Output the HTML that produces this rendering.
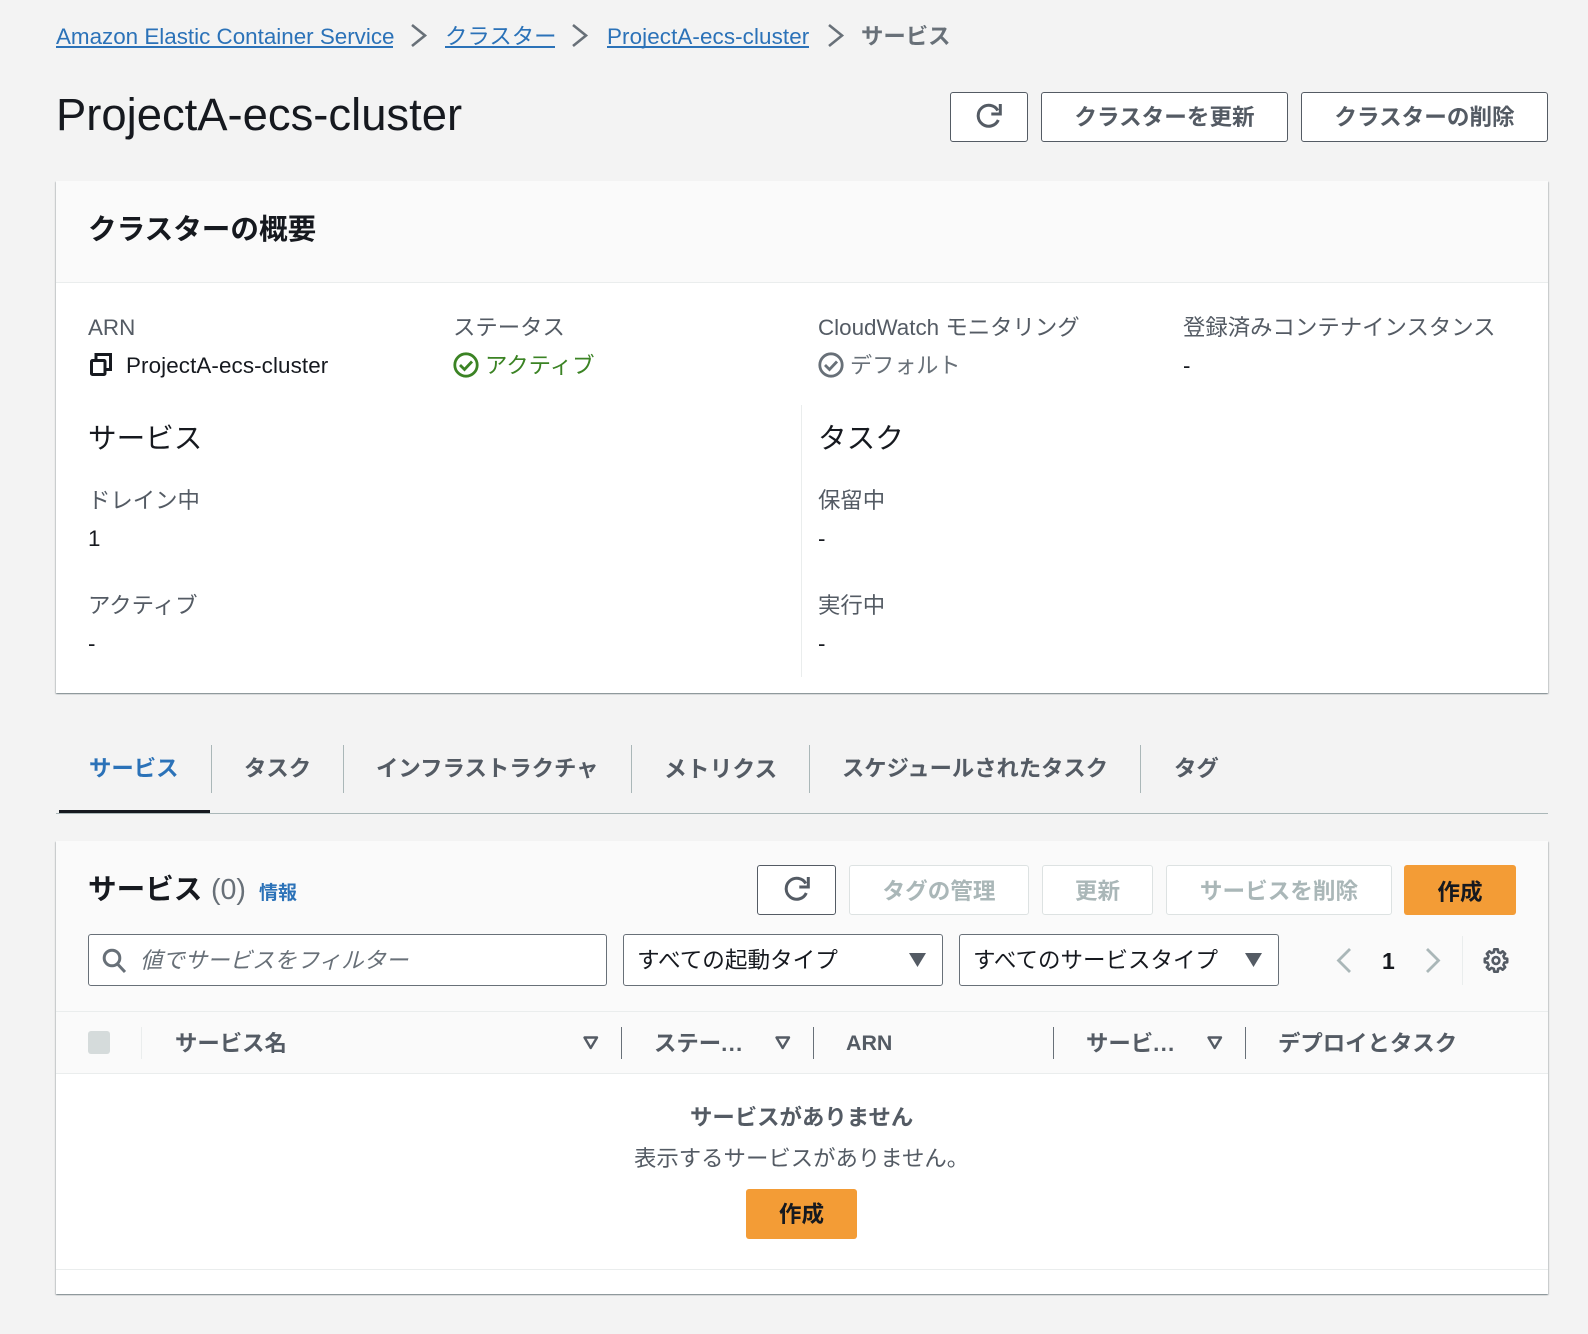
<!DOCTYPE html>
<html lang="ja">
<head>
<meta charset="utf-8">
<title>ProjectA-ecs-cluster</title>
<style>
html,body{margin:0;padding:0;width:1588px;height:1334px;overflow:hidden;background:#f3f3f3}
body{position:relative;font-family:"Liberation Sans","Noto Sans CJK JP",sans-serif;font-size:22.4px;color:#16191f}
.t{position:absolute;white-space:nowrap;line-height:30px;height:30px}
.lab{color:#545b64}
.b{font-weight:700}
.tab{font-weight:700;color:#545b64}
.link{color:#2b72b8}
.h{font-size:28.6px}
.p{position:absolute;left:56px;width:1492px;background:#fff;box-shadow:0 1px 1px 0 rgba(0,28,36,.3),1px 1px 1px 0 rgba(0,28,36,.15),-1px 1px 1px 0 rgba(0,28,36,.15)}
.hd{position:absolute;left:0;right:0;top:0;background:#fafafa}
.ln{position:absolute;background:#eaeded}
.btn{position:absolute;box-sizing:border-box;display:flex;align-items:center;justify-content:center;font-weight:700;font-size:22.6px;border-radius:3px;background:#fff;border:1.5px solid #545b64;color:#545b64;white-space:nowrap}
.dis{border-color:#dde2e2;color:#aab7b8;padding-bottom:2px}
.org{border:none;background:#f39c36;color:#16191f}
.fld{position:absolute;box-sizing:border-box;background:#fff;border:1.5px solid #687078;border-radius:3px}
.dots{letter-spacing:1.2px}
svg{position:absolute;left:0;top:0}
</style>
</head>
<body>

<!-- breadcrumb -->
<div class="t link" style="left:56px;top:22px">Amazon Elastic Container Service</div>
<div class="ln" style="left:56px;top:46px;width:337px;height:2px;background:#2b72b8"></div>
<div class="t link" style="left:445px;top:22px">クラスター</div>
<div class="ln" style="left:445px;top:46px;width:110px;height:2px;background:#2b72b8"></div>
<div class="t link" style="left:607px;top:22px;letter-spacing:.1px">ProjectA-ecs-cluster</div>
<div class="ln" style="left:607px;top:46px;width:202px;height:2px;background:#2b72b8"></div>
<div class="t b" style="left:861px;top:22px;color:#687078">サービス</div>

<!-- title -->
<div class="t" style="left:56px;top:100px;font-size:45.4px;line-height:30px">ProjectA-ecs-cluster</div>

<div class="btn" style="left:950px;top:92px;width:78px;height:50px"></div>
<div class="btn" style="left:1041px;top:92px;width:247px;height:50px;padding-bottom:4px">クラスターを更新</div>
<div class="btn" style="left:1301px;top:92px;width:247px;height:50px;padding-bottom:4px">クラスターの削除</div>

<!-- overview panel -->
<div class="p" style="top:181px;height:512px">
  <div class="hd" style="height:101px;background:#fafafa;border-bottom:1px solid #eaeded"></div>
</div>
<div class="t b h" style="left:88px;top:215px">クラスターの概要</div>

<div class="t lab" style="left:88px;top:313px">ARN</div>
<div class="t" style="left:126px;top:351px;letter-spacing:.1px">ProjectA-ecs-cluster</div>
<div class="t lab" style="left:453px;top:313px">ステータス</div>
<div class="t" style="left:485px;top:351px;color:#3b8324">アクティブ</div>
<div class="t lab" style="left:818px;top:313px">CloudWatch モニタリング</div>
<div class="t" style="left:850px;top:351px;color:#687078;font-size:22.1px">デフォルト</div>
<div class="t lab" style="left:1183px;top:313px">登録済みコンテナインスタンス</div>
<div class="t" style="left:1183px;top:351px">-</div>

<div class="ln" style="left:801px;top:405px;width:1px;height:272px"></div>

<div class="t h" style="left:88px;top:424px">サービス</div>
<div class="t lab" style="left:88px;top:486px">ドレイン中</div>
<div class="t" style="left:88px;top:524px">1</div>
<div class="t lab" style="left:88px;top:591px">アクティブ</div>
<div class="t" style="left:88px;top:629px">-</div>

<div class="t h" style="left:818px;top:424px">タスク</div>
<div class="t lab" style="left:818px;top:486px">保留中</div>
<div class="t" style="left:818px;top:524px">-</div>
<div class="t lab" style="left:818px;top:591px">実行中</div>
<div class="t" style="left:818px;top:629px">-</div>

<!-- tabs -->
<div class="t tab link" style="left:89px;top:754px;color:#2b72b8">サービス</div>
<div class="t tab" style="left:244px;top:754px">タスク</div>
<div class="t tab" style="left:376px;top:754px">インフラストラクチャ</div>
<div class="t tab" style="left:664px;top:754px;font-size:22.8px">メトリクス</div>
<div class="t tab" style="left:842px;top:754px;font-size:22.3px">スケジュールされたタスク</div>
<div class="t tab" style="left:1174px;top:754px">タグ</div>
<div class="ln" style="left:211px;top:745px;width:1px;height:48px;background:#aab7b8"></div>
<div class="ln" style="left:343px;top:745px;width:1px;height:48px;background:#aab7b8"></div>
<div class="ln" style="left:631px;top:745px;width:1px;height:48px;background:#aab7b8"></div>
<div class="ln" style="left:809px;top:745px;width:1px;height:48px;background:#aab7b8"></div>
<div class="ln" style="left:1140px;top:745px;width:1px;height:48px;background:#aab7b8"></div>
<div class="ln" style="left:56px;top:813px;width:1492px;height:1px;background:#aab7b8"></div>
<div class="ln" style="left:59px;top:810px;width:151px;height:3px;background:#16191f"></div>

<!-- services panel -->
<div class="p" style="top:841px;height:453px">
  <div class="hd" style="height:232px"></div>
  <div class="ln" style="left:0;right:0;top:170px;height:1px"></div>
  <div class="ln" style="left:0;right:0;top:232px;height:1px"></div>
  <div class="ln" style="left:0;right:0;top:428px;height:1px"></div>
</div>

<div class="t b h" style="left:88px;top:875px">サービス</div>
<div class="t" style="left:211px;top:875px;font-size:28.6px;color:#687078">(0)</div>
<div class="t b link" style="left:259px;top:879px;font-size:19px">情報</div>

<div class="btn" style="left:757px;top:865px;width:79px;height:50px"></div>
<div class="btn dis" style="left:849px;top:865px;width:180px;height:50px">タグの管理</div>
<div class="btn dis" style="left:1042px;top:865px;width:111px;height:50px">更新</div>
<div class="btn dis" style="left:1166px;top:865px;width:226px;height:50px">サービスを削除</div>
<div class="btn org" style="left:1404px;top:865px;width:112px;height:50px">作成</div>

<div class="fld" style="left:88px;top:934px;width:519px;height:52px"></div>
<div class="t" style="left:140px;top:946px;font-style:italic;color:#687078">値でサービスをフィルター</div>
<div class="fld" style="left:623px;top:934px;width:320px;height:52px"></div>
<div class="t" style="left:637px;top:946px;font-size:22.6px">すべての起動タイプ</div>
<div class="fld" style="left:959px;top:934px;width:320px;height:52px"></div>
<div class="t" style="left:973px;top:946px;font-size:22.5px">すべてのサービスタイプ</div>
<div class="t b" style="left:1382px;top:946px;font-size:23px">1</div>
<div class="ln" style="left:1462px;top:936px;width:1px;height:49px"></div>

<!-- table head -->
<div class="ln" style="left:88px;top:1031px;width:22px;height:23px;background:#d5dbdb;border-radius:3px"></div>
<div class="ln" style="left:141px;top:1027px;width:1px;height:32px"></div>
<div class="t tab" style="left:175px;top:1029px">サービス名</div>
<div class="ln" style="left:621px;top:1027px;width:1px;height:32px;background:#687078"></div>
<div class="t tab" style="left:654px;top:1029px">ステー<span class="dots">...</span></div>
<div class="ln" style="left:813px;top:1027px;width:1px;height:32px;background:#687078"></div>
<div class="t tab" style="left:846px;top:1028px;font-size:21.4px">ARN</div>
<div class="ln" style="left:1053px;top:1027px;width:1px;height:32px;background:#687078"></div>
<div class="t tab" style="left:1086px;top:1029px">サービ<span class="dots">...</span></div>
<div class="ln" style="left:1245px;top:1027px;width:1px;height:32px;background:#687078"></div>
<div class="t tab" style="left:1278px;top:1029px">デプロイとタスク</div>

<!-- empty state -->
<div class="t b lab" style="left:690px;top:1103px">サービスがありません</div>
<div class="t lab" style="left:634px;top:1144px">表示するサービスがありません。</div>
<div class="btn org" style="left:746px;top:1189px;width:111px;height:50px;padding-bottom:4px">作成</div>

<!-- icons -->
<svg width="1588" height="1334" viewBox="0 0 1588 1334" fill="none">
  <g stroke="#687078" stroke-width="2.6">
    <path d="M412 25L425 35.5L412 46"/>
    <path d="M573 25L586 35.5L573 46"/>
    <path d="M829 25L842 35.5L829 46"/>
  </g>
  <g stroke="#545b64" stroke-width="3" transform="translate(-.7 0)">
    <path d="M998.5 110.5A10.5 10.5 0 1 0 999 120"/>
    <path d="M1001 104V114H992"/>
  </g>
  <g transform="translate(-192.7 773)" stroke="#545b64" stroke-width="3">
    <path d="M998.5 110.5A10.5 10.5 0 1 0 999 120"/>
    <path d="M1001 104V114H992"/>
  </g>
  <g stroke="#16191f" stroke-width="3">
    <rect x="91.5" y="360.5" width="13.5" height="14" rx="1"/>
    <path d="M96 359V354.5H110.5V369.5H106"/>
  </g>
  <circle cx="466" cy="365" r="11.2" stroke="#3b8324" stroke-width="2.8"/>
  <path d="M460 365L464.5 369.5L472 361.5" stroke="#3b8324" stroke-width="2.8"/>
  <circle cx="831" cy="365" r="11.2" stroke="#687078" stroke-width="2.8"/>
  <path d="M825 365L829.5 369.5L837 361.5" stroke="#687078" stroke-width="2.8"/>
  <circle cx="112" cy="958" r="7.8" stroke="#687078" stroke-width="3"/>
  <path d="M117.5 964L125 972" stroke="#687078" stroke-width="3"/>
  <path d="M909 953H926L917.5 967Z" fill="#545b64"/>
  <path d="M1245 953H1262L1253.5 967Z" fill="#545b64"/>
  <g stroke="#aab7b8" stroke-width="2.8">
    <path d="M1350 949L1338.5 960.5L1350 972"/>
    <path d="M1427 949L1438.5 960.5L1427 972"/>
  </g>
  <g stroke="#545b64" stroke-linejoin="round" transform="translate(1496 960.5)">
    <path transform="scale(.93)" stroke-width="2.8" d="M9.02-2.25L12.05-1.91L12.05 1.91L9.02 2.25L7.97 4.79L9.87 7.17L7.17 9.87L4.79 7.97L2.25 9.02L1.91 12.05L-1.91 12.05L-2.25 9.02L-4.79 7.97L-7.17 9.87L-9.87 7.17L-7.97 4.79L-9.02 2.25L-12.05 1.91L-12.05-1.91L-9.02-2.25L-7.97-4.79L-9.87-7.17L-7.17-9.87L-4.79-7.97L-2.25-9.02L-1.91-12.05L1.91-12.05L2.25-9.02L4.79-7.97L7.17-9.87L9.87-7.17L7.97-4.79Z"/>
    <circle r="3.4" stroke-width="2.6"/>
  </g>
  <g stroke="#545b64" stroke-width="2.4" stroke-linejoin="round">
    <path d="M584.5 1037.5H597L590.7 1048Z"/>
    <path d="M776.5 1037.5H789L782.7 1048Z"/>
    <path d="M1208.5 1037.5H1221L1214.7 1048Z"/>
  </g>
</svg>
</body>
</html>
